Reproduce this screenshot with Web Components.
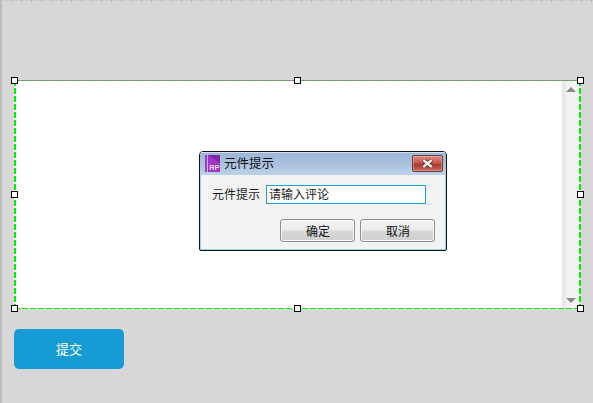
<!DOCTYPE html>
<html lang="zh"><head><meta charset="utf-8">
<style>
html,body{margin:0;padding:0;background:#d7d7d7;}
body{width:593px;height:403px;overflow:hidden;font-family:"Noto Sans CJK SC","Liberation Sans",sans-serif;}
</style></head><body>
<rp-canvas>
  <rp-frame>
    <rp-dialog title-text="元件提示" label="元件提示" value="请输入评论">
      <rp-dbtn>确定</rp-dbtn>
      <rp-dbtn>取消</rp-dbtn>
    </rp-dialog>
  </rp-frame>
  <rp-submit>提交</rp-submit>
</rp-canvas>
<script>
function def(name, html, init){
  customElements.define(name, class extends HTMLElement{
    constructor(){super();this.attachShadow({mode:'open'}).innerHTML=html;}
    connectedCallback(){ if(init) init(this); }
  });
}
def('rp-canvas',`<style>
:host{display:block;box-sizing:border-box;width:593px;height:403px;padding:80px 12px 0 14px;position:relative;
 background:
  repeating-linear-gradient(90deg,#b4b4b4 0 1px,transparent 1px 10px) 1px 0/100% 2px no-repeat,
  linear-gradient(#cbcbcb,#cbcbcb) 0 0/100% 1px no-repeat,
  linear-gradient(#bcbcbc,#bcbcbc) 0 0/2px 100% no-repeat,
  #d7d7d7;}
</style><slot></slot>`);
def('rp-frame',`<style>
:host{display:block;box-sizing:border-box;width:567px;height:229px;position:relative;background:#fff;}
.edge{position:absolute;pointer-events:none;}
.t,.b{left:0;right:0;height:1px;}
.l,.r{top:0;bottom:0;width:2px;}
.t{top:0;background:repeating-linear-gradient(90deg,#35c035 0 2px,#8f8f8f 2px 8px);}
.b{bottom:0;background:repeating-linear-gradient(90deg,#00f000 0 6px,#f4f4f4 6px 8px);}
.l{left:0;background:repeating-linear-gradient(180deg,#00f000 0 6px,transparent 6px 8px);}
.r{right:0;background:repeating-linear-gradient(180deg,#00f000 0 6px,#e8e8e8 6px 8px);}
.body{display:flex;height:100%;box-sizing:border-box;padding:1px 2px 1px 1px;}
.main{flex:1;box-sizing:border-box;padding:70px 0 0 184px;}
.bar{width:17px;display:flex;flex-direction:column;justify-content:space-between;align-items:center;padding:6px 0 5px;box-sizing:border-box;
 background:linear-gradient(90deg,#e4e4e4,#f2f2f2 35%,#f4f4f4);}
.bar svg{display:block;}
.h{position:absolute;width:5px;height:5px;border:1px solid #000;background:#fff;}
</style>
<div class="body"><div class="main"><slot></slot></div>
<div class="bar">
<svg width="10" height="5" viewBox="0 0 10 5"><path d="M5 0 L10 5 H0 Z" fill="#8a8a8a"/></svg>
<svg width="10" height="5" viewBox="0 0 10 5"><path d="M0 0 H10 L5 5 Z" fill="#8a8a8a"/></svg>
</div></div>
<div class="edge t"></div><div class="edge b"></div><div class="edge l"></div><div class="edge r"></div>
<div class="h" style="left:-3px;top:-3px"></div><div class="h" style="left:280px;top:-3px"></div><div class="h" style="right:-3px;top:-3px"></div>
<div class="h" style="left:-3px;top:111px"></div><div class="h" style="right:-3px;top:111px"></div>
<div class="h" style="left:-3px;bottom:-3px"></div><div class="h" style="left:280px;bottom:-3px"></div><div class="h" style="right:-3px;bottom:-3px"></div>`);
def('rp-dialog',`<style>
:host{display:block;box-sizing:border-box;width:248px;height:100px;border:1px solid #101418;border-radius:4px 4px 2px 2px;background:#f3f3f3;font-size:12px;color:#1a1a1a;
 box-shadow:inset 1px 0 0 #9fd4ee,inset -1px 0 0 #9fd4ee,inset 0 -1px 0 #9fd4ee;overflow:hidden;}
.title{height:23px;display:flex;align-items:center;padding:0 3px 0 5px;gap:4px;background:linear-gradient(#9db6d6,#a9c1de 50%,#bcd2ea);box-shadow:inset 0 1px 0 #d5e0ee;}
.name{flex:1;font-size:12.5px;color:#111;line-height:17px;margin-top:-2px;}
.close{box-sizing:border-box;width:31px;height:17px;border:1px solid #6e3a3a;border-radius:2px;display:flex;align-items:center;justify-content:center;
 background:linear-gradient(#d98a80,#c85a50 45%,#a83a30 55%,#c8685a);box-shadow:inset 0 0 0 1px rgba(255,255,255,.3);}
.rowline{display:flex;align-items:center;gap:6px;padding:10px 0 0 12px;height:19px;}
.input{box-sizing:border-box;width:160px;height:19px;border:1px solid #19a0d8;background:#fff;padding:0 2px;line-height:15px;font-size:12px;color:#1a1a1a;}
.acts{display:flex;justify-content:flex-end;gap:5px;padding:15px 11px 0 0;}
.lab{line-height:17px;margin-top:-2px;}
</style>
<div class="title">
<svg width="15" height="17" viewBox="0 0 15 17"><rect width="2" height="17" fill="#a336c4"/><rect x="3" width="12" height="17" fill="#a336c4"/><path d="M3 0 H15 V8 Z" fill="#7a2aa0"/><text x="4.2" y="14.5" font-size="7.5" font-weight="700" fill="#f0d8f8" font-family="Liberation Sans">RP</text></svg>
<span class="name" id="n"></span>
<span class="close"><svg width="15" height="9" viewBox="0 0 15 9"><path d="M3 1 L12 8 M12 1 L3 8" stroke="#5a2a28" stroke-width="4"/><path d="M3.2 1 L11.8 8 M11.8 1 L3.2 8" stroke="#f1ecea" stroke-width="2.4"/></svg></span>
</div>
<div class="rowline"><span class="lab" id="l"></span><div class="input" id="v"></div></div>
<div class="acts"><slot></slot></div>`,el=>{
 const s=el.shadowRoot;
 s.getElementById('n').textContent=el.getAttribute('title-text');
 s.getElementById('l').textContent=el.getAttribute('label');
 s.getElementById('v').textContent=el.getAttribute('value');
});
def('rp-dbtn',`<style>
:host{display:flex;box-sizing:border-box;width:75px;height:23px;border:1px solid #8e8e8e;border-radius:3px;align-items:center;justify-content:center;font-size:12px;color:#111;
 background:linear-gradient(#f4f4f4,#ebebeb 48%,#d8d8d8 52%,#cfcfcf);box-shadow:inset 0 0 0 1px #f8f8f8;}
span{margin:-1px 0 0 1px;}
</style><span><slot></slot></span>`);
def('rp-submit',`<style>
:host{display:flex;box-sizing:border-box;width:110px;height:40px;margin-top:20px;background:#169bd5;border-radius:5px;color:#fff;font-size:13px;align-items:center;justify-content:center;}
span{margin-top:-2px;}
</style><span><slot></slot></span>`);
</script>
</body></html>
